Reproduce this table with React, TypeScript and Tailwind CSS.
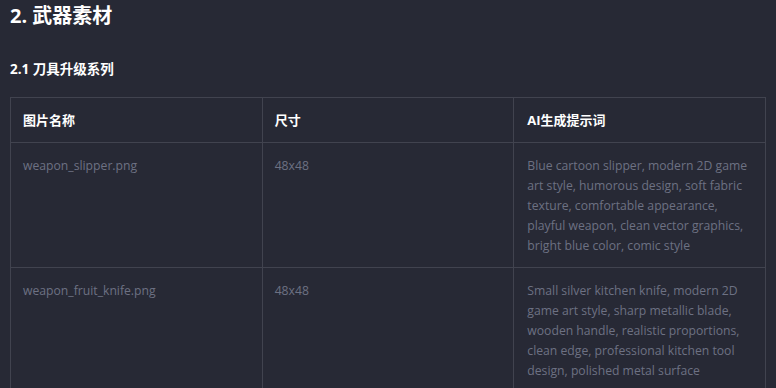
import React from 'react';

const rows = [
  {
    name: 'weapon_slipper.png',
    size: '48x48',
    prompt:
      'Blue cartoon slipper, modern 2D game art style, humorous design, soft fabric texture, comfortable appearance, playful weapon, clean vector graphics, bright blue color, comic style',
  },
  {
    name: 'weapon_fruit_knife.png',
    size: '48x48',
    prompt:
      'Small silver kitchen knife, modern 2D game art style, sharp metallic blade, wooden handle, realistic proportions, clean edge, professional kitchen tool design, polished metal surface',
  },
];

export default function App() {
  return (
    <div
      className="min-h-screen bg-[#272935] px-[10px] pt-[3px]"
      style={{ fontFamily: '"Open Sans", "Noto Sans CJK SC", sans-serif' }}
    >
      <h2 className="text-[20px] font-bold leading-[26px] text-white">2. 武器素材</h2>
      <h3 className="mt-[30px] text-[13.5px] font-bold leading-[20px] text-white">2.1 刀具升级系列</h3>
      <table className="mt-[18px] w-[756px] table-fixed border-collapse text-[12.2px] leading-[20px]">
        <thead>
          <tr>
            <th className="border border-[#41434f] px-[12px] py-[12px] text-left text-[13px] font-bold text-white">图片名称</th>
            <th className="border border-[#41434f] px-[12px] py-[12px] text-left text-[13px] font-bold text-white">尺寸</th>
            <th className="border border-[#41434f] px-[13px] py-[12px] text-left text-[13px] font-bold text-white">AI生成提示词</th>
          </tr>
        </thead>
        <tbody>
          {rows.map((r) => (
            <tr key={r.name}>
              <td className="border border-[#41434f] px-[12px] pt-[13px] pb-[11px] align-top text-[#6d7183]">{r.name}</td>
              <td className="border border-[#41434f] px-[12px] pt-[13px] pb-[11px] align-top text-[#6d7183]">{r.size}</td>
              <td className="border border-[#41434f] px-[13px] pt-[13px] pb-[11px] align-top text-[#6d7183]">{r.prompt}</td>
            </tr>
          ))}
        </tbody>
      </table>
    </div>
  );
}
